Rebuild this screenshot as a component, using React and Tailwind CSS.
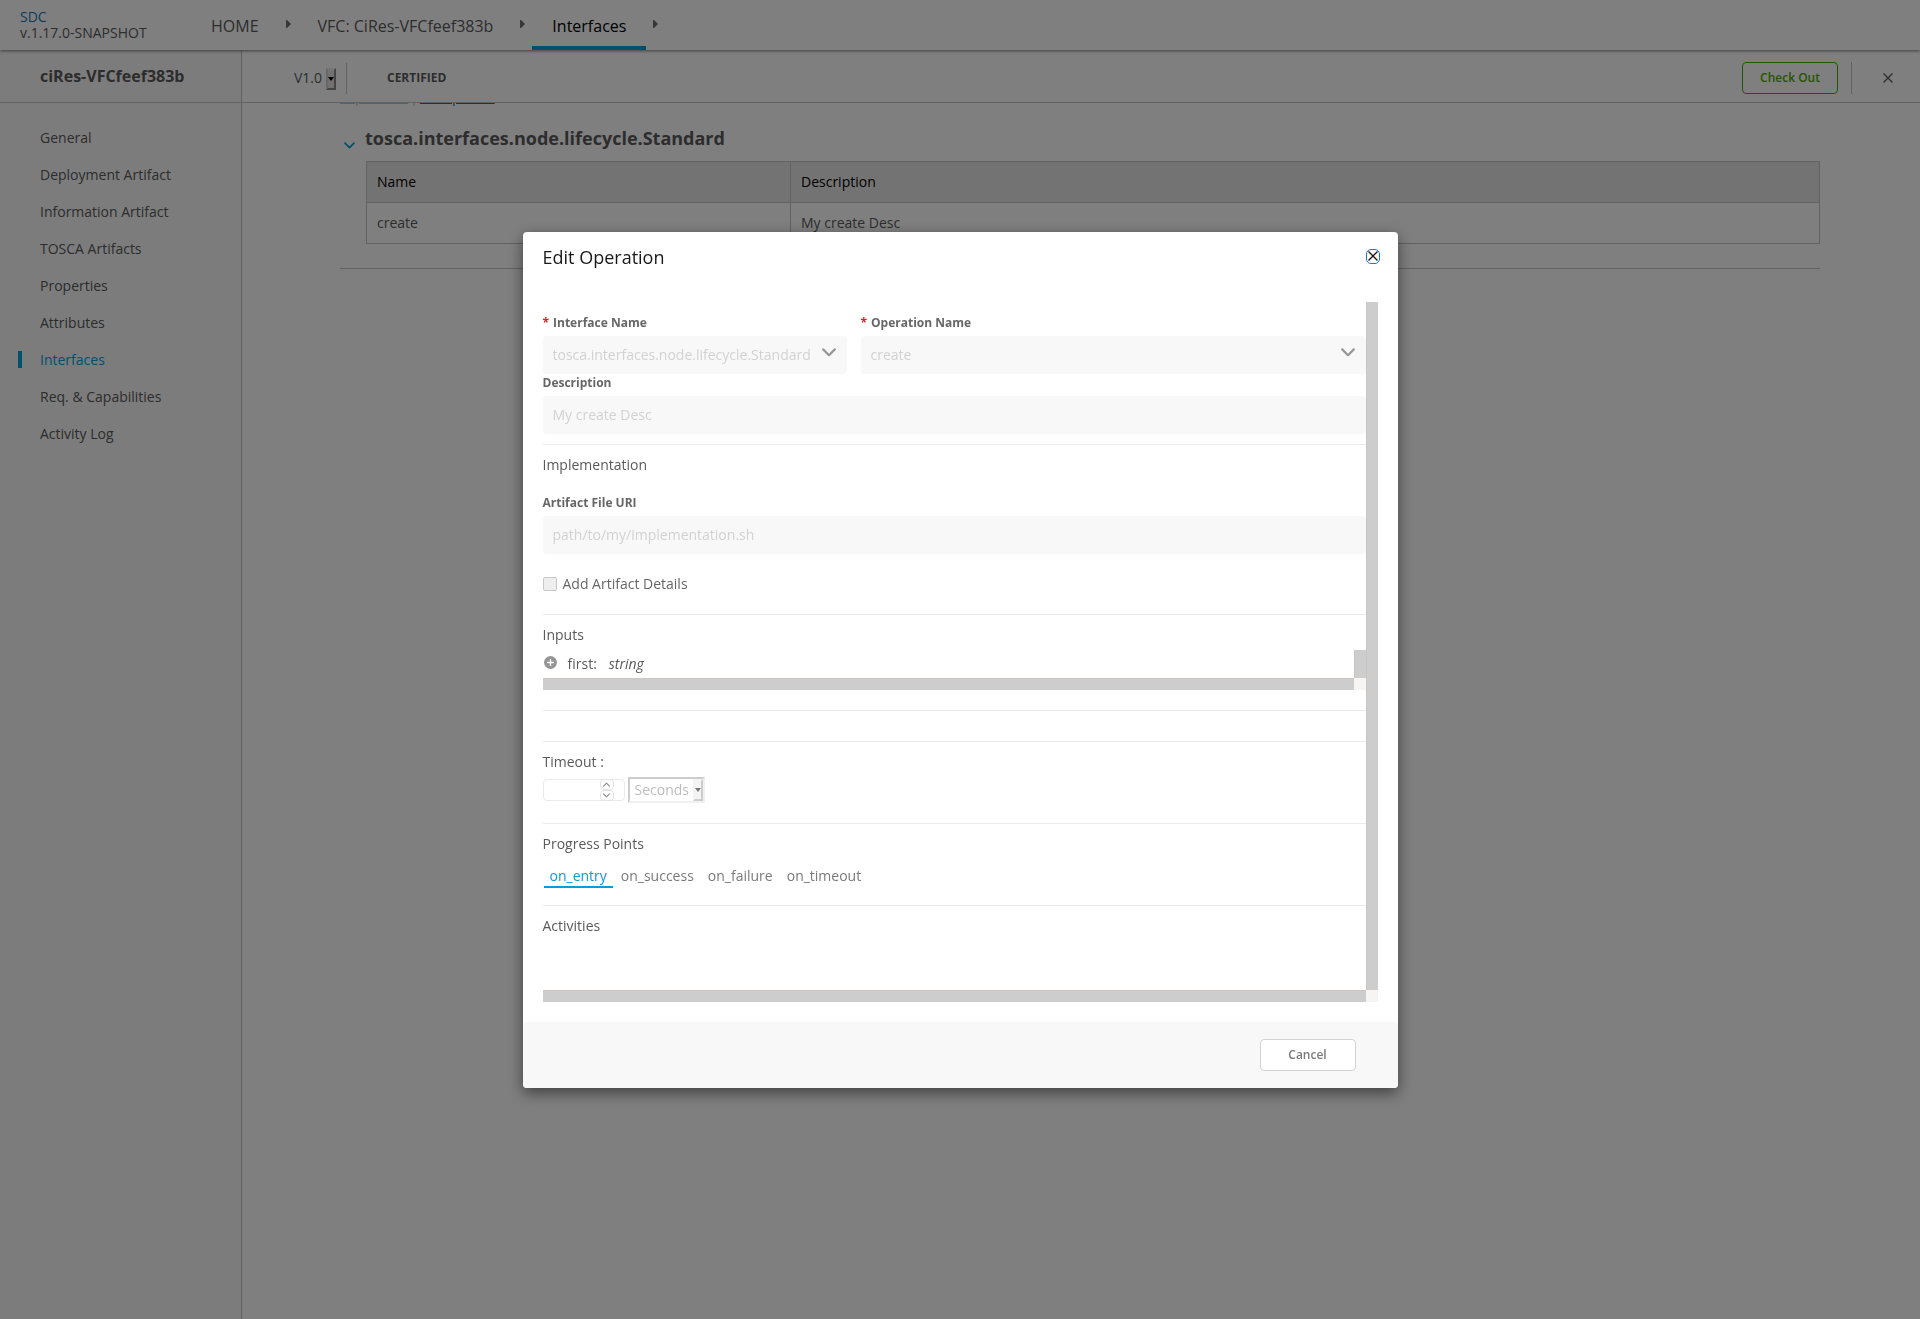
const MENU = [
  'General',
  'Deployment Artifact',
  'Information Artifact',
  'TOSCA Artifacts',
  'Properties',
  'Attributes',
  'Interfaces',
  'Req. & Capabilities',
  'Activity Log',
];

const TABS = ['on_entry', 'on_success', 'on_failure', 'on_timeout'];

function Crumb({ label, active }) {
  return (
    <a
      href="#"
      className={`flex h-full items-center border-b-4 px-5 pt-[6px] ${
        active ? 'border-[#009fdb] text-black' : 'border-transparent'
      }`}
    >
      {label}
    </a>
  );
}

function CrumbArrow() {
  return (
    <svg className="mx-[7px] mb-[3px] h-2 w-[5px]" viewBox="0 0 5 8" fill="#6f6f6f">
      <path d="M0 0h1l4 4-4 4H0z" />
    </svg>
  );
}

function Chevron({ className }) {
  return (
    <svg className={className} viewBox="0 0 14 9" fill="none" stroke="currentColor" strokeWidth="2.2" strokeLinecap="round" strokeLinejoin="round">
      <path d="M1.2 1.4 7 7.2l5.800-5.800" />
    </svg>
  );
}

function Cross({ className }) {
  return (
    <svg className={className} viewBox="0 0 10 10" fill="none" stroke="currentColor" strokeWidth="1.4">
      <path d="M.5.5l9 9M9.500.5l-9 9" />
    </svg>
  );
}

function TopBar() {
  return (
    <header className="relative z-10 flex h-[50px] shrink-0 items-center bg-white shadow-[0_1px_3px_rgba(0,0,0,0.5)]">
      <div className="w-[191px] pl-5 text-sm leading-4">
        <a href="#" className="block text-[#2a76b4]">SDC</a>
        <div>v.1.17.0-SNAPSHOT</div>
      </div>
      <nav className="flex h-full items-center text-base font-medium">
        <Crumb label="HOME" />
        <CrumbArrow />
        <Crumb label="VFC: CiRes-VFCfeef383b" />
        <CrumbArrow />
        <Crumb label="Interfaces" active />
        <CrumbArrow />
      </nav>
    </header>
  );
}

function Sidebar() {
  return (
    <aside className="w-[242px] shrink-0 border-r border-[#c4c4c4] bg-[#f8f8f8]">
      <h1 className="flex h-[53px] items-center border-b border-[#c4c4c4] pl-10 text-base font-bold">ciRes-VFCfeef383b</h1>
      <ul className="pt-4">
        {MENU.map((item) => (
          <li key={item} className="flex h-[37px] items-center pl-[18px]">
            <span className={`h-[17px] w-1 ${item === 'Interfaces' ? 'bg-[#009fdb]' : ''}`} />
            <a href="#" className={`ml-[18px] ${item === 'Interfaces' ? 'text-[#009fdb]' : ''}`}>{item}</a>
          </li>
        ))}
      </ul>
    </aside>
  );
}

function VersionBar() {
  return (
    <div className="flex h-[53px] items-center border-b border-[#c4c4c4] bg-white pt-1 pl-[52px]">
      <div className="relative">
        <select aria-label="Version" className="block h-6 w-[43px] appearance-none bg-transparent">
          <option>V1.0</option>
        </select>
        <span className="pointer-events-none absolute top-0.5 right-px flex h-[22px] w-[10px] items-center justify-center border-2 border-t-[#ececec] border-r-[#8a8a8a] border-b-[#8a8a8a] border-l-[#d0d0d0] bg-[#e4e4e4]">
          <svg className="h-1 w-[6px] shrink-0" viewBox="0 0 6 4" fill="#000">
            <path d="M0 0h6L3 4z" />
          </svg>
        </span>
      </div>
      <span className="ml-[9px] h-[31px] w-px bg-[#c4c4c4]" />
      <span className="ml-10 text-xs font-bold">CERTIFIED</span>
      <button className="ml-auto h-8 w-24 rounded-sm border border-[#4ca90c] text-xs font-semibold text-[#4ca90c]">
        Check Out
      </button>
      <span className="ml-[13px] h-8 w-px bg-[#c4c4c4]" />
      <button aria-label="Close" className="mr-[27px] ml-[31px]">
        <Cross className="size-[10px]" />
      </button>
    </div>
  );
}

function InterfaceList() {
  return (
    <div className="flex-1 overflow-hidden bg-white pr-[100px] pl-[98px]">
      {/* toolbar is scrolled under the version bar */}
      <div className="-mt-4 flex h-5 items-center gap-0.5 leading-5 font-medium">
        <a href="#" className="text-[#9fc7e1] underline">Expand All</a>
        <span className="text-[#c4c4c4]">|</span>
        <a href="#" className="text-[#1072b5] underline">Collapse All</a>
      </div>
      <section className="border-b border-[#c4c4c4] pb-6">
        <h2 className="mt-[17px] flex h-7 items-center text-lg font-bold">
          <Chevron className="mt-[14px] mr-[10px] ml-1 h-[7px] w-[11px] text-[#009fdb]" />
          tosca.interfaces.node.lifecycle.Standard
        </h2>
        <div className="mt-[9px] pl-[26px]">
          <table className="w-full table-fixed border-collapse text-left">
            <thead>
              <tr className="h-[41px] bg-[#e6e6e6] text-black">
                <th className="w-[424px] border border-[#c4c4c4] px-[10px] font-medium">Name</th>
                <th className="border border-[#c4c4c4] px-[10px] font-medium">Description</th>
              </tr>
            </thead>
            <tbody>
              <tr className="h-[41px]">
                <td className="border border-[#c4c4c4] px-[10px]">create</td>
                <td className="border border-[#c4c4c4] px-[10px]">My create Desc</td>
              </tr>
            </tbody>
          </table>
        </div>
      </section>
    </div>
  );
}

function Label({ htmlFor, required, children }) {
  return (
    <label htmlFor={htmlFor} className="mb-1 block text-xs leading-[18px] font-bold text-[#666]">
      {required && <span className="mr-1 text-[#cf2a2a]">*</span>}
      {children}
    </label>
  );
}

function SelectField({ id, label, value, className }) {
  return (
    <div className={className}>
      <Label htmlFor={id} required>{label}</Label>
      <div className="relative">
        <select id={id} disabled className="block h-[38px] w-full appearance-none rounded-sm bg-[#f8f8f8] px-[10px] text-[#d2d2d2] opacity-100">
          <option>{value}</option>
        </select>
        <Chevron className="pointer-events-none absolute top-3 right-[11px] h-[9px] w-[14px] text-[#979797]" />
      </div>
    </div>
  );
}

function TextField({ id, label, value }) {
  return (
    <div>
      <Label htmlFor={id}>{label}</Label>
      <input id={id} type="text" disabled value={value} className="block h-[38px] w-full rounded-sm bg-[#f8f8f8] px-[10px] text-[#d2d2d2]" />
    </div>
  );
}

function Section({ title, className, children }) {
  return (
    <section className={`border-t border-[#eaeaea] pt-[10px] ${className}`}>
      <h3 className="leading-5 font-medium">{title}</h3>
      {children}
    </section>
  );
}

function Timeout() {
  return (
    <div className="mt-[5px] flex h-[26px] items-center gap-[3px]">
      <div className="relative">
        <input type="number" aria-label="Timeout" disabled className="block h-[22px] w-[82px] appearance-none rounded-sm border border-[#eaeaea] bg-white [&::-webkit-inner-spin-button]:hidden" />
        <div className="absolute top-0 right-[11px] flex h-[22px] w-[14px] flex-col text-[#8c8c8c]">
          <span className="flex flex-1 items-center justify-center rounded-[4px] border border-[#e4e4e4]">
            <Chevron className="h-[5px] w-[7px] rotate-180" />
          </span>
          <span className="flex flex-1 items-center justify-center rounded-[4px] border border-[#e4e4e4]">
            <Chevron className="h-[5px] w-[7px]" />
          </span>
        </div>
      </div>
      <div className="relative">
        <select aria-label="Timeout unit" disabled className="block h-[26px] w-[77px] appearance-none border-2 border-t-[#cdcdcd] border-r-[#f0f0f0] border-b-[#f0f0f0] border-l-[#cdcdcd] bg-white pl-[5px] text-[#bdbdbd] opacity-100">
          <option>Seconds</option>
        </select>
        <span className="pointer-events-none absolute top-0.5 right-0.5 flex h-[22px] w-[10px] items-center justify-center border-2 border-t-[#f4f4f4] border-r-[#cdcdcd] border-b-[#cdcdcd] border-l-[#f4f4f4] bg-[#f4f4f4]">
          <svg className="h-1 w-[6px] shrink-0" viewBox="0 0 6 4" fill="#777">
            <path d="M0 0h6L3 4z" />
          </svg>
        </span>
      </div>
    </div>
  );
}

function OperationForm() {
  return (
    <form className="min-w-0 pt-3">
      <div className="flex gap-[14px]">
        <SelectField id="interface" label="Interface Name" value="tosca.interfaces.node.lifecycle.Standard" className="w-[304px]" />
        <SelectField id="operation" label="Operation Name" value="create" className="flex-1" />
      </div>
      <div className="pb-[10px]">
        <TextField id="description" label="Description" value="My create Desc" />
      </div>

      <Section title="Implementation" className="pb-5">
        <div className="mt-[19px]">
          <TextField id="artifact" label="Artifact File URI" value="path/to/my/implementation.sh" />
        </div>
        <label className="mt-5 flex h-5 items-center gap-[6px] text-[#666]">
          <input type="checkbox" disabled className="size-[14px] appearance-none rounded-xs border border-[#c8c8c8] bg-[#eee]" />
          Add Artifact Details
        </label>
      </Section>

      <Section title="Inputs" className="pb-5">
        <div className="mt-[5px] grid grid-cols-[1fr_12px] grid-rows-[28px_12px]">
          <div className="flex items-center pl-px">
            <svg className="mb-0.5 size-[13px]" viewBox="0 0 13 13">
              <circle cx="6.500" cy="6.500" r="6.500" fill="#959595" />
              <path d="M6.500 3v7M3 6.500h7" stroke="#fff" strokeWidth="1.300" />
            </svg>
            <span className="ml-[11px] font-medium">first:</span>
            <em className="ml-3 font-medium">string</em>
          </div>
          <div className="border-l border-[#cbc5be] bg-[#cdcdcd]" />
          <div className="border-t border-[#cbc5be] bg-[#cdcdcd]" />
          <div className="bg-[#f6f5f3]" />
        </div>
      </Section>

      <div className="h-[31px] border-t border-[#eaeaea]" />

      <Section title="Timeout :" className="pb-5">
        <Timeout />
      </Section>

      <Section title="Progress Points" className="pb-[17px]">
        <div className="mt-3 flex gap-0.5 pl-px text-[#7a7a7a]">
          {TABS.map((tab) => (
            <button
              key={tab}
              type="button"
              className={`border-b-2 px-[6px] leading-5 ${
                tab === 'on_entry' ? 'border-[#009fdb] text-[#009fdb]' : 'border-transparent'
              }`}
            >
              {tab}
            </button>
          ))}
        </div>
      </Section>

      <Section title="Activities" className="" />
    </form>
  );
}

function EditOperationModal() {
  return (
    <div className="fixed inset-0 z-20 flex items-center justify-center bg-black/50">
      <div role="dialog" aria-label="Edit Operation" className="w-[875px] rounded bg-white shadow-[0_5px_15px_rgba(0,0,0,0.5)]">
        <div className="flex h-[70px] items-start justify-between pt-3 pr-[19px] pl-5">
          <h2 className="text-lg leading-[26px] font-medium text-[#191919]">Edit Operation</h2>
          <button aria-label="Close dialog" className="mt-[6px] flex h-[13px] w-3 items-center justify-center rounded-[4px] text-[#191919] outline outline-[#1a73e8]">
            <Cross className="size-[10px]" />
          </button>
        </div>
        <div className="grid grid-cols-[1fr_12px] grid-rows-[688px_12px] pr-5 pb-5 pl-5">
          <OperationForm />
          <div className="border-l border-[#cbc5be] bg-[#cdcdcd]" />
          <div className="border-t border-[#cbc5be] bg-[#cdcdcd]" />
          <div className="bg-[#f6f5f3]" />
        </div>
        <div className="flex h-[66px] items-center justify-end rounded bg-[#f8f8f8] pr-[42px]">
          <button className="h-8 w-24 rounded-sm border border-[#d2d2d2] bg-white text-xs font-semibold text-[#7a7a7a]">Cancel</button>
        </div>
      </div>
    </div>
  );
}

export default function App() {
  return (
    <div className="flex min-h-screen flex-col font-['Open_Sans',sans-serif] text-sm text-[#5a5a5a]">
      <TopBar />
      <div className="flex flex-1">
        <Sidebar />
        <main className="flex min-w-0 flex-1 flex-col">
          <VersionBar />
          <InterfaceList />
        </main>
      </div>
      <EditOperationModal />
    </div>
  );
}
